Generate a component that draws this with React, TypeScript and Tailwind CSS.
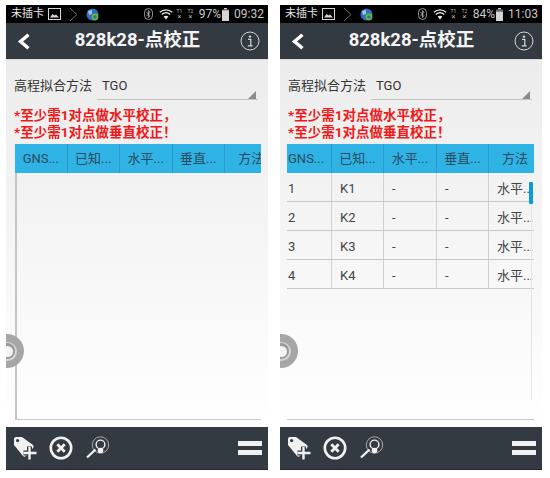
import React from 'react';

const FONT = 'font-["Roboto","Noto_Sans_CJK_SC",sans-serif]';

const HEADERS = ['GNS...', '已知...', '水平...', '垂直...', '方法'];

const POINTS = [
  { id: '1', name: 'K1' },
  { id: '2', name: 'K2' },
  { id: '3', name: 'K3' },
  { id: '4', name: 'K4' },
];

function ImageIcon() {
  return (
    <svg width="13" height="12" viewBox="0 0 13 12" fill="none">
      <rect x="0.5" y="0.5" width="12" height="11" stroke="#d8d8d8" />
      <path d="M2 9.5 L4.5 6 L6.5 7.5 L8 6.5 L11 9.5 Z" fill="#d8d8d8" />
    </svg>
  );
}

function Chevron() {
  return (
    <svg width="9" height="15" viewBox="0 0 9 15" fill="none">
      <path d="M1 1 L8 7.5 L1 14" stroke="#8a8a8a" strokeWidth="0.8" />
    </svg>
  );
}

function Globe() {
  return (
    <svg width="13" height="13" viewBox="0 0 13 13">
      <circle cx="6.5" cy="6.5" r="6" fill="#2f6fc0" />
      <path d="M2 3 L6 2 L6 6 L3 7 Z" fill="#9cc3ea" />
      <circle cx="9" cy="9" r="2.6" fill="none" stroke="#6dbb2a" strokeWidth="1.6" />
    </svg>
  );
}

function Bluetooth() {
  return (
    <svg width="9" height="12" viewBox="0 0 9 12" fill="none">
      <rect x="0.5" y="0.5" width="8" height="11" rx="4" stroke="#b8b8b8" strokeWidth="0.8" />
      <path d="M2.5 4 L6 7.8 L4.5 9.5 L4.5 2.5 L6 4.2 L2.5 8" stroke="#d0d0d0" strokeWidth="0.7" />
    </svg>
  );
}

function Wifi() {
  return (
    <svg width="14" height="11" viewBox="0 0 14 11" fill="none">
      <path d="M0.8 3.2 C4.5 0 9.5 0 13.2 3.2" stroke="#ececec" strokeWidth="1.3" />
      <path d="M2.8 5.4 C5.3 3.3 8.7 3.3 11.2 5.4" stroke="#ececec" strokeWidth="1.3" />
      <path d="M7 10.5 L4.6 7.6 C6 6.5 8 6.5 9.4 7.6 Z" fill="#ececec" />
    </svg>
  );
}

function SimSignal({ label }: { label: string }) {
  return (
    <span className="flex w-[7px] flex-col items-center text-[5px] leading-[6px] text-[#bdbdbd]">
      <span>{label}</span>
      <span className="text-[7px] leading-[6px]">×</span>
    </span>
  );
}

function Battery({ level }: { level: number }) {
  const top = 13 - (11 * level) / 100;
  return (
    <svg width="7" height="13" viewBox="0 0 7 13">
      <rect x="2" y="0" width="3" height="1.5" fill="#cfcfcf" />
      <rect x="0" y="1.5" width="7" height="11.5" fill="#6a6a6a" />
      <rect x="0" y={top} width="7" height={13 - top} fill="#d4d4d4" />
    </svg>
  );
}

function BackIcon() {
  return (
    <svg width="14" height="17" viewBox="0 0 14 17" fill="none">
      <path d="M11.5 1.8 L3.5 8.5 L11.5 15.2" stroke="#fff" strokeWidth="3.4" />
    </svg>
  );
}

function InfoIcon() {
  return (
    <svg width="20" height="20" viewBox="0 0 20 20" fill="none">
      <circle cx="10" cy="10" r="9" stroke="#d5d8da" strokeWidth="1" />
      <circle cx="10" cy="5.6" r="1.2" fill="#d5d8da" />
      <path d="M8 8.4 H10.8 V14.4 M7.8 14.8 H12.6" stroke="#d5d8da" strokeWidth="1.2" />
    </svg>
  );
}

function TagPlusIcon() {
  return (
    <svg width="25" height="24" viewBox="0 0 25 24">
      <path d="M1 3 Q1 1 3 1 L9 1 L20 9 Q21.5 10.5 20 12 L13 20 Q11.5 21.5 10 20 L1 9 Z" fill="#f1f1f1" />
      <circle cx="4.6" cy="4.6" r="1.6" fill="#343a42" />
      <path d="M16.5 10.5 V23.5 M10.5 17 H23.5" stroke="#343a42" strokeWidth="5" />
      <path d="M16.5 11 V23.5 M10.5 17 H23.5" stroke="#f1f1f1" strokeWidth="2.4" />
    </svg>
  );
}

function CloseCircleIcon() {
  return (
    <svg width="24" height="24" viewBox="0 0 24 24" fill="none">
      <circle cx="12" cy="12" r="10.2" stroke="#f1f1f1" strokeWidth="2.6" />
      <path d="M8.3 8.3 L15.7 15.7 M15.7 8.3 L8.3 15.7" stroke="#f1f1f1" strokeWidth="2.8" />
    </svg>
  );
}

function LocateIcon() {
  return (
    <svg width="25" height="24" viewBox="0 0 25 24" fill="none">
      <circle cx="15.5" cy="9" r="8.2" stroke="#c8c8c8" strokeWidth="0.8" />
      <circle cx="15.5" cy="8.5" r="4.4" stroke="#f1f1f1" strokeWidth="1.4" />
      <circle cx="15.5" cy="14.5" r="2.8" fill="#f1f1f1" />
      <path d="M10.5 13.5 L2 21.5" stroke="#f1f1f1" strokeWidth="2.4" />
    </svg>
  );
}

function FloatingRing() {
  return (
    <div className="absolute left-[-16px] top-[274px] flex h-[34px] w-[34px] items-center justify-center rounded-full bg-[#a6a6a6]">
      <div className="flex h-[19px] w-[19px] items-center justify-center rounded-full bg-[#d4d4d4]">
        <div className="flex h-[16px] w-[16px] items-center justify-center rounded-full bg-[#9a9a9a]">
          <div className="h-[11px] w-[11px] rounded-full bg-[#f4f4f4]" />
        </div>
      </div>
    </div>
  );
}

interface PhoneProps {
  battery: number;
  time: string;
  tableMargin: string;
  tableWidth: string;
  columns: string;
  firstHeaderLeft?: boolean;
  showRows?: boolean;
}

function Phone({ battery, time, tableMargin, tableWidth, columns, firstHeaderLeft, showRows }: PhoneProps) {
  return (
    <div className={`flex h-[465px] w-[262px] flex-col overflow-hidden ${FONT}`}>
      {/* status bar */}
      <div className="flex h-[18px] items-center bg-black pl-[5px] pr-[4px]">
        <span className="text-[11px] text-[#e8e8e8]">未插卡</span>
        <span className="ml-[4px] flex"><ImageIcon /></span>
        <span className="ml-[8px] flex"><Chevron /></span>
        <span className="ml-[8px] flex"><Globe /></span>
        <div className="ml-auto flex items-center">
          <Bluetooth />
          <span className="ml-[6px] flex"><Wifi /></span>
          <span className="ml-[3px] flex"><SimSignal label="T1" /></span>
          <span className="ml-[4px] flex"><SimSignal label="T2" /></span>
          <span className="ml-[5px] text-[12px] text-[#c9c9c9]">{battery}%</span>
          <span className="ml-[1px] flex"><Battery level={battery} /></span>
          <span className="ml-[5px] text-[12px] text-[#c9c9c9]">{time}</span>
        </div>
      </div>

      {/* title bar */}
      <div className="flex h-[36px] items-center justify-between bg-[#343a42] pl-[11px] pr-[8px]">
        <BackIcon />
        <span className="ml-[4px] text-[18.5px] font-bold text-[#f4f4f4]">828k28-点校正</span>
        <InfoIcon />
      </div>

      {/* body */}
      <div className="relative flex min-h-0 flex-1 flex-col border-t border-[#dcdcdc] bg-gradient-to-b from-[#ececec] to-[#ffffff] pb-[7px] pt-[15px]">
        <div className="flex h-[25px] pl-[8px]">
          <span className="w-[83px] pt-[1px] text-[13px] leading-[20px] text-[#333333]">高程拟合方法</span>
          <div className="relative h-[25px] w-[161px] border-b border-[#c4c4c4] pl-[5px] pt-[1px] text-[13px] leading-[20px] text-[#333333]">
            TGO
            <svg className="absolute bottom-0 right-[2px]" width="8" height="8" viewBox="0 0 8 8">
              <path d="M8 0 V8 H0 Z" fill="#8c8c8c" />
            </svg>
          </div>
        </div>

        <div className="mt-[7px] pl-[8px] text-[13.5px] font-bold leading-[17px] text-[#f01818]">
          <div>*至少需1对点做水平校正，</div>
          <div>*至少需1对点做垂直校正！</div>
        </div>

        {/* table */}
        <div className={`mt-[3px] flex min-h-0 flex-1 flex-col overflow-hidden border-b border-[#c8c8c8] ${tableMargin} ${tableWidth}`}>
          <div className={`grid h-[29px] shrink-0 bg-[#2fb3e5] ${columns}`}>
            {HEADERS.map((header, i) => (
              <div
                key={header}
                className={`flex items-center overflow-hidden whitespace-nowrap text-[13px] text-[#2b4a5c] ${i < 4 ? 'border-r border-[#2a9ccb]' : ''} ${firstHeaderLeft && i === 0 ? 'justify-start pl-[1px]' : 'justify-center'}`}
              >
                {header}
              </div>
            ))}
          </div>
          {showRows ? (
            POINTS.map((point) => (
              <div key={point.id} className={`grid h-[29px] shrink-0 border-b border-[#c8c8c8] text-[13px] leading-[16px] text-[#444444] ${columns}`}>
                <div className="flex items-center border-r border-[#d0d0d0] pl-[1px] pt-[3px]">{point.id}</div>
                <div className="flex items-center border-r border-[#d0d0d0] pl-[8px] pt-[3px]">{point.name}</div>
                <div className="flex items-center border-r border-[#d0d0d0] pl-[8px] pt-[3px]">-</div>
                <div className="flex items-center border-r border-[#d0d0d0] pl-[8px] pt-[3px]">-</div>
                <div className="flex items-center overflow-hidden whitespace-nowrap pl-[8px] pt-[3px]">水平...</div>
              </div>
            ))
          ) : (
            <div className="flex-1 border-l-2 border-[#c4c4c4]" />
          )}
        </div>

        {showRows && (
          <>
            <div className="absolute bottom-[27px] left-[251px] top-[144px] w-px bg-[#e6e6e6]" />
            <div className="absolute left-[249px] top-[122px] h-[22px] w-[4px] rounded-[1px] bg-[#0a9bd4]" />
          </>
        )}
        <FloatingRing />
      </div>

      {/* bottom bar */}
      <div className="flex h-[43px] items-center border-b border-[#22262b] bg-[#343a42] pl-[7px] pr-[6px]">
        <TagPlusIcon />
        <span className="ml-[11px] flex"><CloseCircleIcon /></span>
        <span className="ml-[12px] flex"><LocateIcon /></span>
        <div className="ml-auto flex w-[24px] flex-col gap-[4px]">
          <div className="h-[5px] bg-[#f1f1f1]" />
          <div className="h-[5px] bg-[#f1f1f1]" />
        </div>
      </div>
    </div>
  );
}

export default function App() {
  return (
    <div className="flex h-[478px] w-[550px] gap-[12px] overflow-hidden bg-white pl-[6px] pt-[5px]">
      <Phone
        battery={97}
        time="09:32"
        tableMargin="ml-[9px]"
        tableWidth="w-[246px]"
        columns="grid-cols-[52.5px_52.5px_52.5px_52.5px_52.5px]"
      />
      <Phone
        battery={84}
        time="11:03"
        tableMargin="ml-[7px]"
        tableWidth="w-[247px]"
        columns="grid-cols-[45px_52px_53px_52px_52px]"
        firstHeaderLeft
        showRows
      />
    </div>
  );
}
